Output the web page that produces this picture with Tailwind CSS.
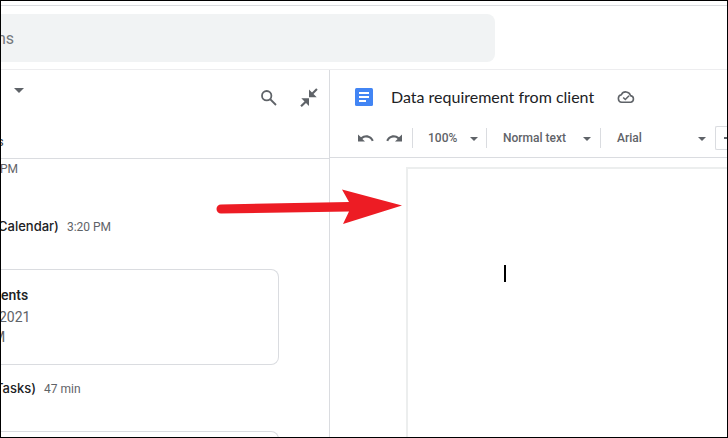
<!DOCTYPE html>
<html lang="en">
<head>
  <meta charset="UTF-8">
  <meta name="viewport" content="width=device-width, initial-scale=1.0">
  <title>Data requirement from client</title>
  <script src="https://cdn.jsdelivr.net/npm/@tailwindcss/browser@4"></script>
</head>
<body class="relative flex flex-col h-screen overflow-hidden border border-black bg-white font-['Roboto',sans-serif] text-[#5f6368]">
  <!-- search bar -->
  <header class="shrink-0 pt-1 border-b border-[#ededef]">
    <div class="border-t border-[#dadce0] pt-2 pb-[7px]">
      <input type="search" aria-label="Search" placeholder="ns" class="block w-[68%] h-12 rounded-r-lg bg-[#f1f3f4] text-base -indent-1 placeholder:text-[#74787c]">
    </div>
  </header>

  <main class="flex flex-1 min-h-0">
    <!-- chat column -->
    <section class="flex flex-col w-[329px] shrink-0 border-r border-[#dadce0]">
      <div class="flex flex-col justify-between h-[89px] shrink-0 border-b border-[#dadce0]">
        <div class="flex items-center pt-4 pl-3 pr-2">
          <button aria-label="Room options" class="-mt-3.5">
            <svg class="w-3 h-3" viewBox="0 0 12 12" fill="#5f6368"><path d="M1 3h10L6 8z"/></svg>
          </button>
          <button aria-label="Search in room" class="ml-auto">
            <svg class="w-6 h-6" viewBox="0 0 24 24" fill="none" stroke="#5f6368" stroke-width="1.800"><circle cx="9.700" cy="9.700" r="4.700"/><path d="M13 13l6 6"/></svg>
          </button>
          <button aria-label="Collapse" class="ml-4">
            <svg class="w-6 h-6" viewBox="0 0 24 24" fill="#5f6368"><path d="M12 3.500l3 3 4.200-4.200 1.500 1.500L16.500 8l3.200 3.200H12zM4.300 12.200H12v7.700l-3-3-4.200 4.200-1.500-1.500 4.200-4.200z"/></svg>
          </button>
        </div>
        <span class="-ml-1 pb-2 text-[13px] leading-4 text-[#3c4043]">s</span>
      </div>

      <div class="flex-1 min-h-0 overflow-hidden">
        <p class="mt-0.5 -ml-px text-xs leading-4">PM</p>
        <p class="flex items-baseline gap-2 -ml-[3px] mt-[39px] text-xs leading-5"><b class="font-['Inter',sans-serif] text-[13px] font-medium text-[#202124]">Calendar)</b>3:20 PM</p>
        <article class="mt-8 mr-[50px] h-24 pt-[15px] rounded-r-lg border border-l-0 border-[#dadce0] text-sm leading-5">
          <h2 class="font-medium text-[#202124]">ents</h2>
          <p class="-ml-0.5 pt-0.5">2021</p>
          <p class="-ml-2">M</p>
        </article>
        <p class="flex items-baseline gap-2 -ml-1.5 mt-[13px] text-xs leading-5"><b class="font-['Inter',sans-serif] text-[13px] font-medium text-[#202124]">Tasks)</b>47 min</p>
        <article class="mt-8 mr-[50px] h-24 rounded-r-lg border border-l-0 border-[#dadce0]"></article>
      </div>
    </section>

    <!-- document -->
    <section class="flex flex-col flex-1 min-w-0">
      <div class="h-[88px] shrink-0 border-b border-[#dadce0]">
        <div class="flex items-center h-12 pt-1.5 pl-[25px]">
          <svg class="w-[18px] h-[18px]" viewBox="0 0 18 18"><rect width="18" height="18" rx="1.500" fill="#4285f4"/><path d="M4 5h10M4 9h10M4 13h7" stroke="#fff" stroke-width="1.800"/></svg>
          <h1 class="ml-[18px] font-['Lato',sans-serif] text-base text-[#202124] whitespace-nowrap">Data requirement from client</h1>
          <svg class="w-[18px] h-[18px] ml-[23px]" viewBox="0 0 16 16" fill="none" stroke="#5f6368" stroke-width="1.400"><path d="M4.200 12.700a3.400 3.400 0 0 1-.3-6.700A4.300 4.300 0 0 1 12 6.800a3 3 0 0 1 .3 5.900z"/><path d="M5.500 8.400l1.900 1.800 3.300-3.300"/></svg>
        </div>

        <div class="flex items-center h-10 pl-[27px] text-xs font-medium whitespace-nowrap">
          <button aria-label="Undo" class="shrink-0">
            <svg class="w-[18px] h-[18px]" viewBox="0 0 18 18" fill="#5f6368"><path d="M1 5.500v7h7L5.400 9.900C6.500 9 7.800 8.500 9.300 8.500c2.600 0 4.700 1.500 5.500 3.700l1.900-.7C15.600 8.600 12.700 6.200 9.300 6.200c-2 0-3.900.8-5.300 2z"/></svg>
          </button>
          <button aria-label="Redo" class="shrink-0 ml-2.5">
            <svg class="w-[18px] h-[18px]" viewBox="0 0 18 18" fill="#5f6368"><path d="M17 5.500v7h-7l2.600-2.600c-1.100-.9-2.400-1.400-3.900-1.400-2.600 0-4.700 1.500-5.500 3.700l-1.900-.7C2.400 8.600 5.300 6.200 8.700 6.200c2 0 3.900.8 5.300 2z"/></svg>
          </button>
          <span class="shrink-0 w-px h-5 ml-[9px] bg-[#dadce0]"></span>
          <button class="shrink-0 flex items-center justify-between w-[73px] pl-[15px] pr-2">100%
            <svg class="w-2 h-2" viewBox="0 0 8 8" fill="#5f6368"><path d="M0 3h8L4 7z"/></svg>
          </button>
          <span class="shrink-0 w-px h-5 bg-[#dadce0]"></span>
          <button class="shrink-0 flex items-center justify-between w-[113px] pl-4 pr-[9px]">Normal text
            <svg class="w-2 h-2" viewBox="0 0 8 8" fill="#5f6368"><path d="M0 3h8L4 7z"/></svg>
          </button>
          <span class="shrink-0 w-px h-5 bg-[#dadce0]"></span>
          <button class="shrink-0 flex items-center justify-between w-[114px] pl-4 pr-[9px]">Arial
            <svg class="w-2 h-2" viewBox="0 0 8 8" fill="#5f6368"><path d="M0 3h8L4 7z"/></svg>
          </button>
          <button aria-label="Decrease font size" class="flex items-center flex-1 h-6 pl-2 rounded-l-xs border border-r-0 border-[#dadce0]">
            <span class="w-3 h-0.5 bg-[#5f6368]"></span>
          </button>
        </div>
      </div>

      <div class="flex-1 mt-[9px] ml-[76px] pt-24 pl-24 border-t-2 border-l-2 border-[#eceeee]">
        <div class="w-0.5 h-[17px] bg-black"></div>
      </div>
    </section>
  </main>

  <!-- pointer arrow -->
  <svg class="absolute left-[215px] top-[187px] w-[188px] h-[38px]" viewBox="0 0 188 38" fill="#ed1c24"><path d="M5 16.500L133 14 126 1.500 186 17.500 127 36 133 23.500 5 25.500a4.500 4.500 0 0 1 0-9z"/></svg>
</body>
</html>
